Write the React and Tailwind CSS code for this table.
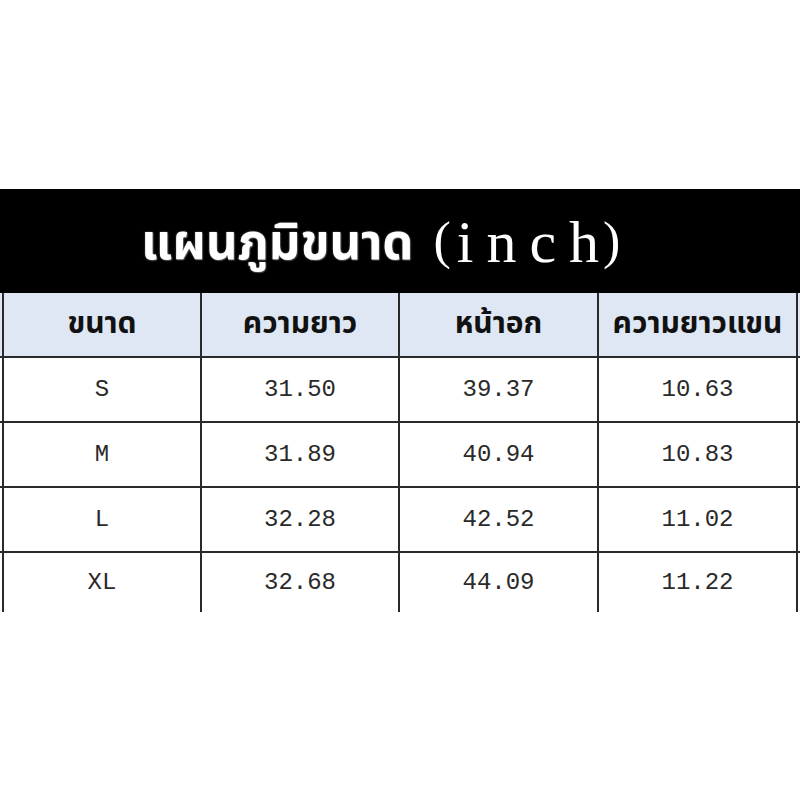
const headers = ['ขนาด', 'ความยาว', 'หน้าอก', 'ความยาวแขน'];

const rows = [
  ['S', '31.50', '39.37', '10.63'],
  ['M', '31.89', '40.94', '10.83'],
  ['L', '32.28', '42.52', '11.02'],
  ['XL', '32.68', '44.09', '11.22'],
];

const widths = ['w-[198px]', 'w-[198px]', 'w-[199px]', 'w-[199px]'];

const thai = { fontFamily: '"Noto Sans Thai", "Noto Sans", "DejaVu Sans", sans-serif' };
const mono = { fontFamily: '"Liberation Mono", "DejaVu Sans Mono", monospace' };
const serif = { fontFamily: '"Liberation Serif", serif' };

export default function App() {
  return (
    <div className="w-[800px] h-[800px] bg-white overflow-hidden">
      <div className="h-[189px]" />

      {/* Title band */}
      <div className="h-[104px] bg-black flex items-center pl-[141px] pt-[6px]">
        <span
          className="text-white text-[49px] font-bold leading-none"
          style={{ ...thai, textShadow: '0 0 2px #666, 1px 1px 1px #444' }}
        >
          แผนภูมิขนาด
        </span>
        <span className="text-white text-[52px] leading-none ml-[20px] -mt-[6px]" style={serif}>
          (
        </span>
        <span className="text-white text-[60px] leading-none ml-[6px] -mt-[4px]" style={serif}>
          <span className="tracking-[13px]">inc</span>h
        </span>
        <span className="text-white text-[52px] leading-none ml-[4px] -mt-[6px]" style={serif}>
          )
        </span>
      </div>

      {/* Header row */}
      <div className="flex h-[65px] pl-[2px] bg-[#dee7f3] border-b-2 border-[#2a2a2a]">
        {headers.map((h, i) => (
          <div
            key={h}
            className={`${widths[i]} shrink-0 border-l-2 border-[#2a2a2a] flex items-center justify-center text-[30px] font-bold text-[#111]`}
            style={thai}
          >
            {h}
          </div>
        ))}
        <div className="flex-1 border-l-2 border-[#2a2a2a]" />
      </div>

      {/* Data rows */}
      {rows.map((r, ri) => (
        <div
          key={r[0]}
          className={`flex pl-[2px] ${ri === rows.length - 1 ? 'h-[59px]' : 'h-[65px] border-b-2 border-[#2a2a2a]'}`}
        >
          {r.map((c, i) => (
            <div
              key={i}
              className={`${widths[i]} shrink-0 border-l-2 border-[#2a2a2a] flex items-center justify-center text-[24px] text-[#2a2a2a]`}
              style={mono}
            >
              {c}
            </div>
          ))}
          <div className="flex-1 border-l-2 border-[#2a2a2a]" />
        </div>
      ))}
    </div>
  );
}
